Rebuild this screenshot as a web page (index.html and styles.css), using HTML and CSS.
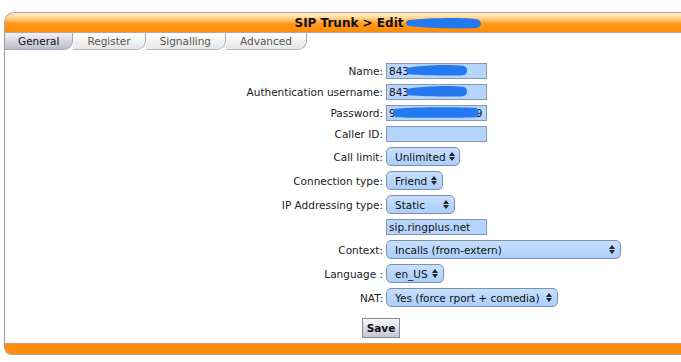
FILE: index.html
```html
<!DOCTYPE html>
<html lang="en">
  <head>
    <meta charset="UTF-8" />
    <meta name="viewport" content="width=device-width, initial-scale=1.0" />
    <title>SIP Trunk &gt; Edit</title>
    <link rel="stylesheet" href="styles.css">
  </head>

  <body>
    <div class="panel">
      <!-- Orange title bar -->
      <div class="panel-head">
        <span>SIP Trunk &gt; Edit</span>
        <svg class="blot blot-title" viewBox="0 0 78 14" preserveAspectRatio="none">
          <path d="M4 4 C 20 2, 55 1, 72 3 C 78 4, 79 11, 72 12 C 55 13, 20 12, 4 10 C 0 9, 0 5, 4 4Z" />
        </svg>
      </div>

      <!-- Tabs -->
      <ul class="tabs">
        <li class="active">General</li>
        <li>Register</li>
        <li>Signalling</li>
        <li>Advanced</li>
      </ul>

      <form class="trunk-form" onsubmit="return false">
        <div class="fields">
          <label>Name:</label>
          <span class="field">
            <input class="text" type="text" value="843" />
            <svg class="blot blot-name" viewBox="0 0 78 14" preserveAspectRatio="none">
              <path d="M2 4 C 20 1, 55 0, 72 2 C 78 3, 79 11, 72 12 C 55 13, 20 12, 3 11 C 0 9, 0 6, 2 4Z" />
            </svg>
          </span>

          <label>Authentication username:</label>
          <span class="field">
            <input class="text" type="text" value="843" />
            <svg class="blot blot-name" viewBox="0 0 78 14" preserveAspectRatio="none">
              <path d="M2 4 C 20 1, 55 0, 72 2 C 78 3, 79 11, 72 12 C 55 13, 20 12, 3 11 C 0 9, 0 6, 2 4Z" />
            </svg>
          </span>

          <label>Password:</label>
          <span class="field">
            <input class="text" type="text" value="90000000000009" />
            <svg class="blot blot-pass" viewBox="0 0 78 14" preserveAspectRatio="none">
              <path d="M2 3 C 20 1, 55 1, 74 2 C 78 3, 78 12, 74 12 C 55 13, 20 13, 2 12 C 0 10, 0 5, 2 3Z" />
            </svg>
          </span>

          <label>Caller ID:</label>
          <span class="field"><input class="text" type="text" value="" /></span>

          <label>Call limit:</label>
          <span class="select w-limit">Unlimited <svg class="arrows" viewBox="0 0 6 9"><path d="M0 4 L3 0 L6 4Z M0 5 L3 9 L6 5Z" /></svg></span>

          <label>Connection type:</label>
          <span class="select w-conn">Friend <svg class="arrows" viewBox="0 0 6 9"><path d="M0 4 L3 0 L6 4Z M0 5 L3 9 L6 5Z" /></svg></span>

          <label>IP Addressing type:</label>
          <span class="select w-ip">Static <svg class="arrows" viewBox="0 0 6 9"><path d="M0 4 L3 0 L6 4Z M0 5 L3 9 L6 5Z" /></svg></span>

          <span></span>
          <span class="field"><input class="text" type="text" value="sip.ringplus.net" /></span>

          <label>Context:</label>
          <span class="select w-context">Incalls (from-extern) <svg class="arrows" viewBox="0 0 6 9"><path d="M0 4 L3 0 L6 4Z M0 5 L3 9 L6 5Z" /></svg></span>

          <label>Language :</label>
          <span class="select w-lang">en_US <svg class="arrows" viewBox="0 0 6 9"><path d="M0 4 L3 0 L6 4Z M0 5 L3 9 L6 5Z" /></svg></span>

          <label>NAT:</label>
          <span class="select w-nat">Yes (force rport + comedia) <svg class="arrows" viewBox="0 0 6 9"><path d="M0 4 L3 0 L6 4Z M0 5 L3 9 L6 5Z" /></svg></span>
        </div>

        <div class="actions">
          <button class="save" type="submit">Save</button>
        </div>
      </form>

      <div class="panel-foot"></div>
    </div>
  </body>
</html>
```

FILE: styles.css
```css
/* Page */
body {
  margin: 0;
  background: #fff;
  color: #1a1a1a;
  font-family: "DejaVu Sans", Verdana, sans-serif;
  font-size: 10.5px;
  overflow: hidden;
}

/* Panel frame (runs off the right side of the window) */
.panel {
  margin: 12px 0 0 4px;
  width: 768px;
}

.panel-head {
  height: 19px;
  border: 1px solid #b7a597;
  border-right: none;
  border-top-left-radius: 10px;
  background: linear-gradient(#ffeccc 0%, #ffd797 25%, #ff9a1e 55%, #ff8b05 100%);
  display: flex;
  align-items: center;
  justify-content: center;
  font-size: 12px;
  font-weight: bold;
  color: #111;
}

/* Blue redaction strokes */
.blot {
  fill: #2479ef;
}

.blot-title {
  width: 77px;
  height: 14px;
  margin-left: 2px;
  margin-top: 1px;
}

/* Tabs */
.tabs {
  display: flex;
  margin: 0;
  padding: 0;
  list-style: none;
  border-left: 1px solid #9a9a9a;
}

.tabs li {
  height: 16px;
  line-height: 16px;
  padding: 0 14px;
  border-right: 1px solid #a9a9a9;
  border-bottom: 1px solid #bcbcbc;
  border-bottom-right-radius: 9px;
  background: linear-gradient(#ffffff, #e6e6e6);
  color: #555;
}

.tabs li.active {
  padding: 0 13px;
  background: linear-gradient(#f1f1f6, #bcbccd);
  border-bottom-color: #a8a8b8;
  color: #111;
}

/* Form body */
.trunk-form {
  border-left: 1px solid #9a9a9a;
  padding: 13px 0 5px;
}

.fields {
  display: grid;
  grid-template-columns: 378px auto;
  column-gap: 3px;
  row-gap: 5px;
  align-items: center;
  justify-items: start;
}

.fields label {
  justify-self: end;
}

.field {
  position: relative;
  display: block;
  height: 16px;
}

.text {
  display: block;
  box-sizing: border-box;
  width: 101px;
  height: 16px;
  margin: 0;
  padding: 0 2px;
  border: 1px solid #8797ad;
  background: #b6d5fd;
  color: #111;
  font: inherit;
}

.field .blot {
  position: absolute;
  top: 1px;
  height: 13px;
}

.blot-name {
  left: 20px;
  width: 62px;
}

.blot-pass {
  left: 7px;
  width: 87px;
}

/* Aqua style pop-up menus */
.select {
  display: flex;
  align-items: center;
  justify-content: space-between;
  box-sizing: border-box;
  height: 19px;
  padding: 0 5px 0 8px;
  border: 1px solid #7f90a9;
  border-radius: 5px;
  background: linear-gradient(#c6dffd, #abcefb);
  color: #111;
  white-space: nowrap;
}

.arrows {
  flex-shrink: 0;
  width: 6px;
  height: 9px;
  fill: #222;
  margin-left: 3px;
}

.w-limit { width: 74px; }
.w-conn { width: 57px; }
.w-ip { width: 69px; }
.w-context { width: 235px; }
.w-lang { width: 58px; }
.w-nat { width: 172px; }

/* Save button */
.actions {
  padding-left: 357px;
  margin-top: 11px;
}

.save {
  display: block;
  width: 38px;
  height: 20px;
  padding: 0;
  border: 1px solid #8a8a96;
  background: linear-gradient(#f6f6fb, #c5c5d6);
  color: #111;
  font-family: inherit;
  font-size: 10.5px;
  font-weight: bold;
}

/* Bottom orange strip */
.panel-foot {
  height: 10px;
  border-top: 1px solid #c6a27c;
  border-bottom: 1px solid #b9a08a;
  border-left: 1px solid #b9a08a;
  border-bottom-left-radius: 8px;
  background: #ff8c0b;
}
```
